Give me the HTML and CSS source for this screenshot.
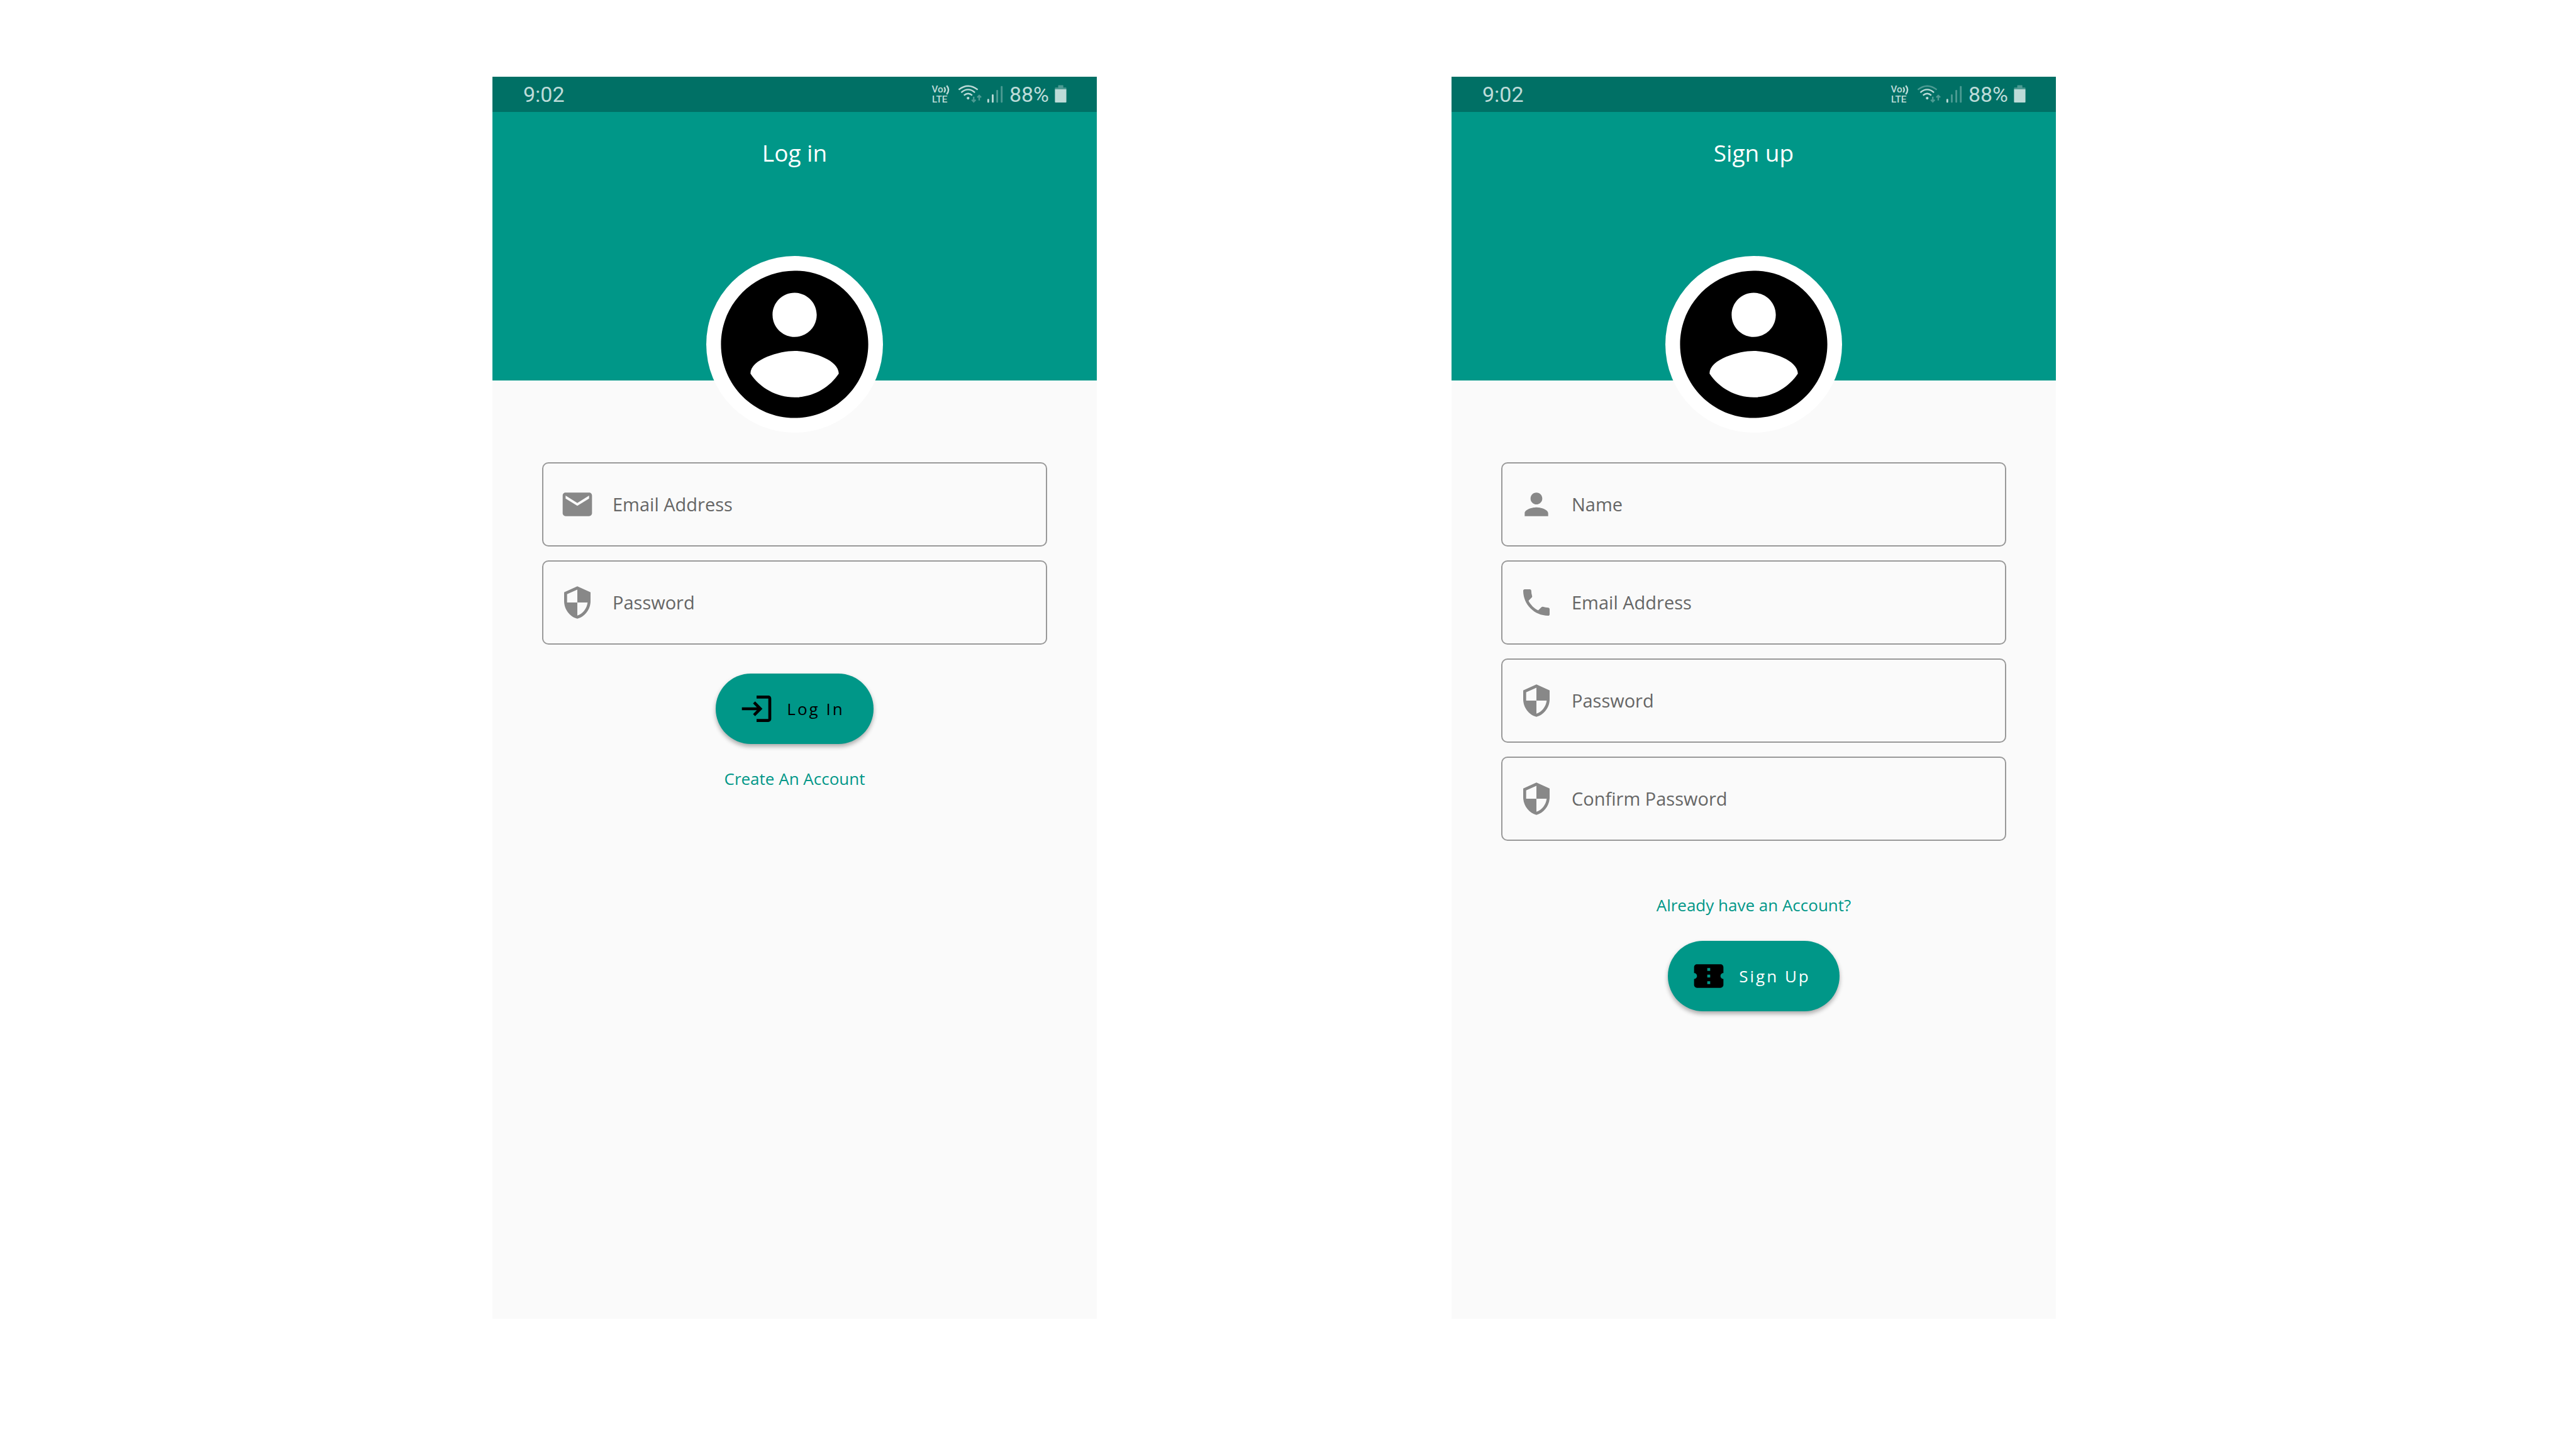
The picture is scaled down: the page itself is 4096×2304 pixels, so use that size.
FILE: index.html
```html
<!DOCTYPE html>
<html lang="en">
<head>
<meta charset="utf-8">
<meta name="viewport" content="width=device-width, initial-scale=1">
<title>Log in / Sign up</title>
<link rel="stylesheet" href="styles.css">
</head>
<body>
<main class="board">
  <section class="phone">
    <div class="status">
      <span class="clock">9:02</span>
      <div class="indicators">
        <svg class="ind-volte" viewBox="125 63 125 165" aria-hidden="true">
          <text class="volte-text" x="127" y="137">Vo</text>
          <path class="line" d="M209 103q14 16 0 34M226 92q24 27 0 58"/>
          <text class="volte-text" x="129" y="205">LTE</text>
        </svg>
        <svg class="ind-wifi" viewBox="284 80 178 130" aria-hidden="true">
          <path class="line" d="M307 120q63-50 128 0"/>
          <path class="line" d="M324 139q46-40 92 0M342 158q28-24 56 0"/>
          <circle class="on" cx="370" cy="177" r="9"/>
          <path class="line dim" d="M408 167v34M395 188l13 13 13-13M445 193v-34M432 172l13-13 13 13"/>
        </svg>
        <svg class="ind-signal" viewBox="490 80 118 130" aria-hidden="true">
          <rect class="on" x="494" y="182" width="12" height="25" rx="5"/>
          <rect class="on" x="524" y="151" width="12" height="56" rx="5"/>
          <rect class="off" x="554" y="122" width="12" height="85" rx="5"/>
          <rect class="off" x="584" y="96" width="12" height="111" rx="5"/>
        </svg>
        <span class="charge">88%</span>
        <svg class="ind-battery" viewBox="950 80 90 130" aria-hidden="true">
          <path class="off" d="M978 105V91q0-2 2-2h31q2 0 2 2v14h17q4 0 4 4v9h-78v-9q0-4 4-4z"/>
          <path class="on" d="M956 117h78v86q0 4-4 4h-70q-4 0-4-4z"/>
        </svg>
      </div>
    </div>
    <header class="hero">
      <h1 class="title">Log in</h1>
      <svg class="avatar" viewBox="0 0 24 24" aria-hidden="true">
        <circle cx="12" cy="12" r="12" fill="#fff"/>
        <path d="M12 2C6.480 2 2 6.480 2 12s4.480 10 10 10 10-4.480 10-10S17.520 2 12 2zm0 3c1.660 0 3 1.340 3 3s-1.340 3-3 3-3-1.340-3-3 1.340-3 3-3zm0 14.200c-2.500 0-4.710-1.280-6-3.220.03-1.990 4-3.080 6-3.080 1.990 0 5.970 1.090 6 3.080-1.290 1.940-3.500 3.220-6 3.220z"/>
      </svg>
    </header>
    <form class="form">
      <div class="fields">
        <div class="field">
          <svg class="icon" viewBox="0 0 24 24" aria-hidden="true"><path d="M20 4H4c-1.100 0-1.990.9-1.990 2L2 18c0 1.100.9 2 2 2h16c1.100 0 2-.9 2-2V6c0-1.100-.9-2-2-2zm0 4l-8 5-8-5V6l8 5 8-5v2z"/></svg>
          <input type="email" placeholder="Email Address" aria-label="Email Address">
        </div>
        <div class="field">
          <svg class="icon" viewBox="0 0 24 24" aria-hidden="true"><path d="M12 1L3 5v6c0 5.550 3.840 10.740 9 12 5.160-1.260 9-6.450 9-12V5l-9-4zm0 10.990h7c-.53 4.120-3.280 7.790-7 8.940V12H5V6.300l7-3.110v8.800z"/></svg>
          <input type="password" placeholder="Password" aria-label="Password">
        </div>
      </div>
      <button class="pill pill-dark" type="button">
        <svg class="icon" viewBox="0 0 24 24" aria-hidden="true"><path d="M11 7L9.600 8.400l2.600 2.600H2v2h10.200l-2.600 2.600L11 17l5-5-5-5zm9 12h-8v2h8c1.100 0 2-.9 2-2V5c0-1.100-.9-2-2-2h-8v2h8v14z"/></svg>
        <span>Log In</span>
      </button>
      <a class="link link-below" href="#signup">Create An Account</a>
    </form>
  </section>

  <section class="phone" id="signup">
    <div class="status">
      <span class="clock">9:02</span>
      <div class="indicators">
        <svg class="ind-volte" viewBox="125 63 125 165" aria-hidden="true">
          <text class="volte-text" x="127" y="137">Vo</text>
          <path class="line" d="M209 103q14 16 0 34M226 92q24 27 0 58"/>
          <text class="volte-text" x="129" y="205">LTE</text>
        </svg>
        <svg class="ind-wifi" viewBox="284 80 178 130" aria-hidden="true">
          <path class="line dim" d="M307 120q63-50 128 0"/>
          <path class="line" d="M324 139q46-40 92 0M342 158q28-24 56 0"/>
          <circle class="on" cx="370" cy="177" r="9"/>
          <path class="line dim" d="M408 167v34M395 188l13 13 13-13M445 193v-34M432 172l13-13 13 13"/>
        </svg>
        <svg class="ind-signal" viewBox="490 80 118 130" aria-hidden="true">
          <rect class="on" x="494" y="182" width="12" height="25" rx="5"/>
          <rect class="off" x="524" y="151" width="12" height="56" rx="5"/>
          <rect class="off" x="554" y="122" width="12" height="85" rx="5"/>
          <rect class="off" x="584" y="96" width="12" height="111" rx="5"/>
        </svg>
        <span class="charge">88%</span>
        <svg class="ind-battery" viewBox="950 80 90 130" aria-hidden="true">
          <path class="off" d="M978 105V91q0-2 2-2h31q2 0 2 2v14h17q4 0 4 4v9h-78v-9q0-4 4-4z"/>
          <path class="on" d="M956 117h78v86q0 4-4 4h-70q-4 0-4-4z"/>
        </svg>
      </div>
    </div>
    <header class="hero">
      <h1 class="title">Sign up</h1>
      <svg class="avatar" viewBox="0 0 24 24" aria-hidden="true">
        <circle cx="12" cy="12" r="12" fill="#fff"/>
        <path d="M12 2C6.480 2 2 6.480 2 12s4.480 10 10 10 10-4.480 10-10S17.520 2 12 2zm0 3c1.660 0 3 1.340 3 3s-1.340 3-3 3-3-1.340-3-3 1.340-3 3-3zm0 14.200c-2.500 0-4.710-1.280-6-3.220.03-1.990 4-3.080 6-3.080 1.990 0 5.970 1.090 6 3.080-1.290 1.940-3.500 3.220-6 3.220z"/>
      </svg>
    </header>
    <form class="form">
      <div class="fields">
        <div class="field">
          <svg class="icon" viewBox="0 0 24 24" aria-hidden="true"><path d="M12 12c2.210 0 4-1.790 4-4s-1.790-4-4-4-4 1.790-4 4 1.790 4 4 4zm0 2c-2.670 0-8 1.340-8 4v2h16v-2c0-2.660-5.330-4-8-4z"/></svg>
          <input type="text" placeholder="Name" aria-label="Name">
        </div>
        <div class="field">
          <svg class="icon" viewBox="0 0 24 24" aria-hidden="true"><path d="M6.620 10.790c1.440 2.830 3.760 5.140 6.590 6.590l2.200-2.200c.27-.27.67-.36 1.020-.24 1.120.37 2.330.57 3.570.57.55 0 1 .45 1 1V20c0 .55-.45 1-1 1-9.390 0-17-7.610-17-17 0-.55.45-1 1-1h3.500c.55 0 1 .45 1 1 0 1.250.2 2.450.57 3.570.11.35.03.74-.25 1.020l-2.200 2.200z"/></svg>
          <input type="email" placeholder="Email Address" aria-label="Email Address">
        </div>
        <div class="field">
          <svg class="icon" viewBox="0 0 24 24" aria-hidden="true"><path d="M12 1L3 5v6c0 5.550 3.840 10.740 9 12 5.160-1.260 9-6.450 9-12V5l-9-4zm0 10.990h7c-.53 4.120-3.280 7.790-7 8.940V12H5V6.300l7-3.110v8.800z"/></svg>
          <input type="password" placeholder="Password" aria-label="Password">
        </div>
        <div class="field">
          <svg class="icon" viewBox="0 0 24 24" aria-hidden="true"><path d="M12 1L3 5v6c0 5.550 3.840 10.740 9 12 5.160-1.260 9-6.450 9-12V5l-9-4zm0 10.990h7c-.53 4.120-3.280 7.790-7 8.940V12H5V6.300l7-3.110v8.800z"/></svg>
          <input type="password" placeholder="Confirm Password" aria-label="Confirm Password">
        </div>
      </div>
      <a class="link link-above" href="#">Already have an Account?</a>
      <button class="pill pill-light" type="button">
        <svg class="icon" viewBox="0 0 24 24" aria-hidden="true"><path d="M22 10V6c0-1.110-.9-2-2-2H4c-1.100 0-1.990.89-1.990 2v4c1.100 0 1.990.9 1.990 2s-.89 2-2 2v4c0 1.100.9 2 2 2h16c1.100 0 2-.9 2-2v-4c-1.100 0-2-.9-2-2s.9-2 2-2zm-9 7.500h-2v-2h2v2zm0-4.500h-2v-2h2v2zm0-4.500h-2v-2h2v2z"/></svg>
        <span>Sign Up</span>
      </button>
    </form>
  </section>
</main>
</body>
</html>
```
FILE: styles.css
```css
:root {
  --teal: #009788;
  --teal-dark: #007065;
  --paper: #fafafa;
  --status-on: #bddbd8;
  --status-off: #4d9b93;
}

* {
  box-sizing: border-box;
}

body {
  margin: 0;
  background: #fff;
  font-family: "Open Sans", "Noto Sans", sans-serif;
  color: #000;
}

.board {
  display: grid;
  grid-template-columns: 783fr 961fr 564fr 961fr 827fr;
  min-height: 100vh;
  padding: 122px 0 207px;
}

.phone {
  grid-column: 2;
  background: var(--paper);
}

.phone + .phone {
  grid-column: 4;
}

/* Status bar */
.status {
  display: flex;
  align-items: center;
  justify-content: space-between;
  height: 56px;
  padding: 0 47px 0 49px;
  background: var(--teal-dark);
  color: var(--status-on);
  font-family: Roboto, sans-serif;
  font-size: 34px;
  line-height: 56px;
}

.indicators {
  display: flex;
  align-items: center;
  gap: 8px;
}

.indicators svg {
  display: block;
  height: 31px;
  margin-bottom: 3px;
}

.indicators .ind-volte {
  width: 30px;
  height: 40px;
}

.ind-wifi {
  width: 42px;
}

.ind-signal {
  width: 28px;
}

.ind-battery {
  width: 21px;
}

.volte-text {
  fill: var(--status-on);
  font-size: 64px;
  font-weight: 500;
}

.on {
  fill: var(--status-on);
}

.off {
  fill: var(--status-off);
}

.line {
  fill: none;
  stroke: var(--status-on);
  stroke-width: 10;
}

.line.dim {
  stroke: var(--status-off);
}

/* Header with the overlapping avatar */
.hero {
  display: flex;
  flex-direction: column;
  align-items: center;
  padding-top: 40px;
  background: var(--teal);
}

.title {
  margin: 0;
  color: #fff;
  font-size: 37px;
  font-weight: 400;
  line-height: 50px;
}

.avatar {
  display: block;
  width: 281px;
  height: 281px;
  margin: 139px 0 -83px;
}

/* Form */
.form {
  display: flex;
  flex-direction: column;
  align-items: center;
  padding: 130px 79px 0;
}

.fields {
  display: flex;
  flex-direction: column;
  gap: 22px;
  width: 100%;
}

.field {
  display: flex;
  align-items: center;
  gap: 28px;
  height: 134px;
  padding: 0 26px;
  border: 2px solid #999;
  border-radius: 10px;
}

.icon {
  display: block;
  flex: none;
  width: 56px;
  height: 56px;
  fill: #888;
}

.field input {
  flex: 1;
  min-width: 0;
  padding: 0;
  border: 0;
  outline: 0;
  background: none;
  font: inherit;
  font-size: 29px;
  line-height: 40px;
  color: #666;
}

.field input::placeholder {
  color: #666;
  opacity: 1;
}

.pill {
  display: flex;
  align-items: center;
  gap: 20px;
  height: 112px;
  padding: 0 46px 0 37px;
  border: 0;
  border-radius: 56px;
  background: var(--teal);
  box-shadow: 0 4px 7px rgba(0, 0, 0, 0.32);
  font: inherit;
  font-size: 26px;
  line-height: 36px;
  letter-spacing: 3px;
}

.pill .icon {
  fill: #000;
}

.pill-dark {
  margin-top: 46px;
  color: #000;
}

.pill-light {
  margin-top: 39px;
  color: #fff;
}

.link {
  color: var(--teal);
  font-size: 26px;
  line-height: 36px;
  text-decoration: none;
}

.link-below {
  margin-top: 37px;
}

.link-above {
  margin-top: 84px;
}
```
